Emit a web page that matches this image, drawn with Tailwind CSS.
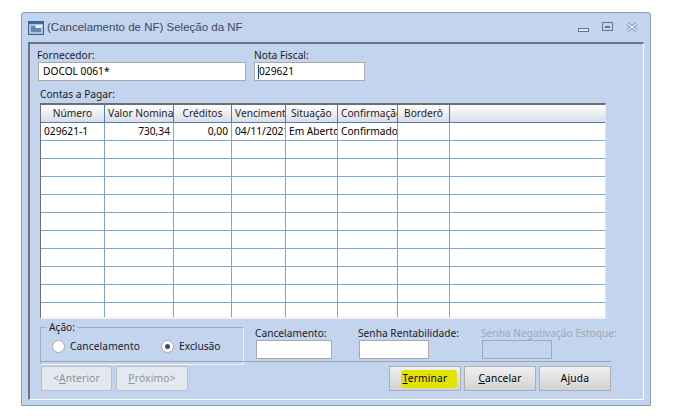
<!DOCTYPE html>
<html lang="pt">
<head>
    <meta charset="UTF-8">
    <title>Seleção da NF</title>
    <script src="https://cdn.jsdelivr.net/npm/@tailwindcss/browser@4"></script>
</head>
<body class="bg-white w-[684px] h-[416px] overflow-hidden font-['Noto_Sans',sans-serif] text-[10.2px] text-[#1c1c1c]">

    <!-- Janela -->
    <div class="ml-[21px] mt-[12px] w-[630px] h-[394px] bg-[#c2d4ee] border border-[#8c9cb0] rounded-t-[3px] flex flex-col">

        <!-- Barra de titulo -->
        <div class="h-[29px] shrink-0 flex items-center pl-[6px] pr-[12px]">
            <svg width="16" height="14" viewBox="0 0 16 14" class="mr-[3px]">
                <rect x="0.5" y="0.5" width="15" height="13" fill="#a8c4e4" stroke="#3a5f92"/>
                <rect x="1" y="1" width="14" height="2" fill="#3a6ea8"/>
                <path d="M3 6h4M3 8h10M3 10h10" stroke="#234a78" stroke-width="1"/>
                <rect x="8" y="4" width="6" height="3" fill="#e8f0fa"/>
            </svg>
            <span class="text-[11.5px] text-[#3c4a5c] font-['Liberation_Sans',sans-serif]">(Cancelamento de NF) Seleção da NF</span>
            <div class="ml-auto flex items-center gap-[13px] -mt-[2px]">
                <span class="block w-[11px] h-[4px] mt-[6px] border border-[#5f7894] bg-[#dfe9f6]"></span>
                <span class="w-[11px] h-[9px] border border-[#5f7894] flex items-center justify-center"><span class="block w-[5px] h-[2px] bg-[#5f7894]"></span></span>
                <svg width="12" height="10" viewBox="0 0 12 10"><path d="M1.5 1.5L10.5 8.5M10.5 1.5L1.5 8.5" stroke="#7a8ea6" stroke-width="3"/><path d="M1.5 1.5L10.5 8.5M10.5 1.5L1.5 8.5" stroke="#eef4fb" stroke-width="1.4"/></svg>
            </div>
        </div>

        <!-- Painel -->
        <div class="ml-[6px] w-[616px] h-[358px] border-t-2 border-l-2 border-t-[#6b7480] border-l-[#6b7480] border-r border-b border-r-white border-b-white flex flex-col">

            <!-- Fornecedor / Nota Fiscal -->
            <div class="flex pl-[7px] pt-[5px]">
                <div class="w-[217px]">
                    <div class="h-[13px] leading-[13px]">Fornecedor:</div>
                    <div class="ml-[1px] w-[208px] h-[19px] bg-white border border-[#a9a9a9] pl-[4px] leading-[17px] text-black">DOCOL 0061*</div>
                </div>
                <div>
                    <div class="h-[13px] leading-[13px]">Nota Fiscal:</div>
                    <div class="relative w-[111px] h-[19px] bg-white border border-[#a9a9a9] pl-[4px] leading-[17px] text-black">
                        029621
                        <span class="absolute left-[3px] top-[2px] w-px h-[14px] bg-[#1d3f80]"></span>
                    </div>
                </div>
            </div>

            <div class="pl-[10px] mt-[6px] h-[14px] leading-[14px]">Contas a Pagar:</div>

            <!-- Grade -->
            <div class="ml-[10px] mt-[2px] w-[566px] h-[216px] bg-white border-t-2 border-l border-t-[#6e6e6e] border-l-[#6e6e6e] border-r border-b-2 border-r-[#e4e4e4] border-b-[#eef0f4] overflow-hidden">
                <div class="h-[18px] flex bg-gradient-to-b from-white to-[#d9dde6] border-b border-b-[#4a7fb5]">
                    <div class="w-[64px] shrink-0 border-r border-r-[#4a7fb5] text-center leading-[17px] overflow-hidden whitespace-nowrap">Número</div>
                    <div class="w-[69px] shrink-0 border-r border-r-[#4a7fb5] pl-[3px] leading-[17px] overflow-hidden whitespace-nowrap">Valor Nominal</div>
                    <div class="w-[58px] shrink-0 border-r border-r-[#4a7fb5] text-center leading-[17px] overflow-hidden whitespace-nowrap">Créditos</div>
                    <div class="w-[54px] shrink-0 border-r border-r-[#4a7fb5] pl-[3px] leading-[17px] overflow-hidden whitespace-nowrap">Vencimento</div>
                    <div class="w-[52px] shrink-0 border-r border-r-[#4a7fb5] pl-[5px] leading-[17px] overflow-hidden whitespace-nowrap">Situação</div>
                    <div class="w-[60px] shrink-0 border-r border-r-[#4a7fb5] pl-[3px] leading-[17px] overflow-hidden whitespace-nowrap">Confirmação</div>
                    <div class="w-[52px] shrink-0 border-r border-r-[#4a7fb5] text-center leading-[17px] overflow-hidden whitespace-nowrap">Borderô</div>
                </div>
                <div class="h-[18px] flex border-b border-b-[#7fa6cf] text-black">
                    <div class="w-[64px] shrink-0 border-r border-r-[#7fa6cf] pl-[3px] leading-[17px] overflow-hidden whitespace-nowrap">029621-1</div>
                    <div class="w-[69px] shrink-0 border-r border-r-[#7fa6cf] pr-[3px] text-right leading-[17px] overflow-hidden whitespace-nowrap">730,34</div>
                    <div class="w-[58px] shrink-0 border-r border-r-[#7fa6cf] pr-[3px] text-right leading-[17px] overflow-hidden whitespace-nowrap">0,00</div>
                    <div class="w-[54px] shrink-0 border-r border-r-[#7fa6cf] pl-[3px] leading-[17px] overflow-hidden whitespace-nowrap">04/11/2021</div>
                    <div class="w-[52px] shrink-0 border-r border-r-[#7fa6cf] pl-[3px] leading-[17px] overflow-hidden whitespace-nowrap">Em Aberto</div>
                    <div class="w-[60px] shrink-0 border-r border-r-[#7fa6cf] pl-[3px] leading-[17px] overflow-hidden whitespace-nowrap">Confirmado</div>
                    <div class="w-[52px] shrink-0 border-r border-r-[#7fa6cf]"></div>
                </div>
                <div class="h-[180px] bg-[repeating-linear-gradient(to_bottom,transparent_0,transparent_17px,#7fa6cf_17px,#7fa6cf_18px)] flex">
                    <div class="w-[64px] shrink-0 border-r border-r-[#7fa6cf]"></div>
                    <div class="w-[69px] shrink-0 border-r border-r-[#7fa6cf]"></div>
                    <div class="w-[58px] shrink-0 border-r border-r-[#7fa6cf]"></div>
                    <div class="w-[54px] shrink-0 border-r border-r-[#7fa6cf]"></div>
                    <div class="w-[52px] shrink-0 border-r border-r-[#7fa6cf]"></div>
                    <div class="w-[60px] shrink-0 border-r border-r-[#7fa6cf]"></div>
                    <div class="w-[52px] shrink-0 border-r border-r-[#7fa6cf]"></div>
                </div>
            </div>

            <!-- Acao e senhas -->
            <div class="flex h-[38px] mt-[8px] pl-[10px]">
                <div class="relative w-[204px] h-[38px] border-t border-l border-t-[#a3acb8] border-l-[#a3acb8] border-r border-b border-r-[#eef3fa] border-b-[#eef3fa]">
                    <span class="absolute left-[6px] -top-[6px] px-[2px] bg-[#c2d4ee] leading-[11px]">Ação:</span>
                    <div class="flex items-center h-[30px] pt-[7px] pl-[11px]">
                        <span class="w-[13px] h-[13px] rounded-full bg-white border border-[#b5a79c]"></span>
                        <span class="ml-[5px] tracking-[0.1px]">Cancelamento</span>
                        <span class="ml-[21px] w-[13px] h-[13px] rounded-full bg-white border border-[#b5a79c] flex items-center justify-center"><span class="block w-[5px] h-[5px] rounded-full bg-[#2f4f80]"></span></span>
                        <span class="ml-[5px]">Exclusão</span>
                    </div>
                    <div class="absolute left-0 top-[33px] w-[570px] h-px bg-[#9aa5b4]"></div>
                </div>
                <div class="ml-[11px] w-[103px]">
                    <div class="h-[13px] leading-[13px]">Cancelamento:</div>
                    <div class="ml-[1px] w-[76px] h-[19px] bg-white border border-[#a9a9a9]"></div>
                </div>
                <div class="w-[123px]">
                    <div class="h-[13px] leading-[13px]">Senha Rentabilidade:</div>
                    <div class="ml-[1px] w-[70px] h-[19px] bg-white border border-[#a9a9a9]"></div>
                </div>
                <div>
                    <div class="h-[13px] leading-[13px] text-[#a0a8b4] whitespace-nowrap">Senha Negativação Estoque:</div>
                    <div class="ml-[1px] w-[70px] h-[19px] border border-[#a0a8b4]"></div>
                </div>
            </div>

            <!-- Botoes -->
            <div class="flex mt-[1px] pl-[11px] tracking-[0.2px]">
                <button class="w-[71px] h-[25px] bg-[#e4e9ef] border border-[#b8bec6] rounded-[2px] text-[#8a929c]">&lt;<u>A</u>nterior</button>
                <button class="ml-[4px] w-[72px] h-[25px] bg-[#e4e9ef] border border-[#b8bec6] rounded-[2px] text-[#8a929c]"><u>P</u>róximo&gt;</button>
                <button class="relative ml-[201px] w-[72px] h-[25px] bg-gradient-to-b from-[#f0f0f0] to-[#d2d2d2] border border-[#b0b0b0] text-black">
                    <span class="absolute left-[11px] top-[3px] w-[56px] h-[18px] bg-[#e3e300] rounded-[3px]"></span>
                    <span class="relative"><u>T</u>erminar</span>
                </button>
                <button class="ml-[3px] w-[72px] h-[25px] bg-gradient-to-b from-[#f0f0f0] to-[#d2d2d2] border border-[#b0b0b0] text-black"><u>C</u>ancelar</button>
                <button class="ml-[3px] w-[72px] h-[25px] bg-gradient-to-b from-[#f0f0f0] to-[#d2d2d2] border border-[#b0b0b0] text-black">A<u>j</u>uda</button>
            </div>
        </div>
    </div>
</body>
</html>
